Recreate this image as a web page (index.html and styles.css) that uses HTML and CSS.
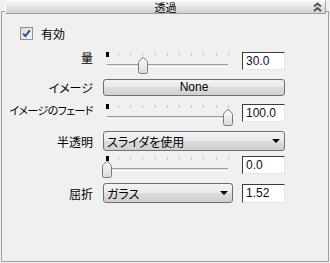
FILE: index.html
```html
<!DOCTYPE html>
<html lang="ja">
<head>
<meta charset="utf-8">
<title>透過</title>
<link rel="stylesheet" href="styles.css">
</head>
<body>
<div class="panel">
    <div class="titlebar">
        <span></span>
        <span class="title">透過</span>
        <svg class="collapse" width="9" height="10" viewBox="0 0 9 10">
            <polyline points="1,4.5 4.5,1.5 8,4.5" />
            <polyline points="1,9 4.5,6 8,9" />
        </svg>
    </div>

    <label class="check">
        <svg class="box" width="13" height="13" viewBox="0 0 13 13">
            <defs>
                <linearGradient id="boxg" x1="0" y1="0" x2="1" y2="1">
                    <stop offset="0" stop-color="#d6d9de"/>
                    <stop offset="1" stop-color="#f6f6f6"/>
                </linearGradient>
                <linearGradient id="thumbg" x1="0" y1="0" x2="0" y2="1">
                    <stop offset="0" stop-color="#fbfbfb"/>
                    <stop offset="1" stop-color="#dadada"/>
                </linearGradient>
            </defs>
            <rect x="0.5" y="0.5" width="12" height="12" fill="url(#boxg)" stroke="#8e8f8f"/>
            <path d="M3.2 6.6 L5.4 9 L9.8 3.4" fill="none" stroke="#24448f" stroke-width="1.8"/>
        </svg>
        有効
    </label>

    <!-- 量 -->
    <div class="row r-slider">
        <span class="label">量</span>
        <div class="slider">
            <svg class="thumb" style="left:35px" width="10" height="17" viewBox="0 0 10 17"><path d="M0.5 5.5 Q0.5 4.6 1.3 3.8 L4 1 Q5 0.2 6 1 L8.7 3.8 Q9.5 4.6 9.5 5.5 V14.5 Q9.5 16.5 7.5 16.5 H2.5 Q0.5 16.5 0.5 14.5 Z" fill="url(#thumbg)" stroke="#7a7a7a"/></svg>
        </div>
        <span class="field">30.0</span>
    </div>

    <!-- イメージ -->
    <div class="row r-button">
        <span class="label">イメージ</span>
        <span class="btn">None</span>
    </div>

    <!-- イメージのフェード -->
    <div class="row r-slider">
        <span class="label narrow">イメージのフェード</span>
        <div class="slider">
            <svg class="thumb" style="left:120px" width="10" height="17" viewBox="0 0 10 17"><path d="M0.5 5.5 Q0.5 4.6 1.3 3.8 L4 1 Q5 0.2 6 1 L8.7 3.8 Q9.5 4.6 9.5 5.5 V14.5 Q9.5 16.5 7.5 16.5 H2.5 Q0.5 16.5 0.5 14.5 Z" fill="url(#thumbg)" stroke="#7a7a7a"/></svg>
        </div>
        <span class="field">100.0</span>
    </div>

    <!-- 半透明 -->
    <div class="row r-select">
        <span class="label">半透明</span>
        <span class="select wide">スライダを使用<i class="arrow"></i></span>
    </div>

    <div class="row r-slider">
        <span class="label"></span>
        <div class="slider">
            <svg class="thumb" style="left:-1px" width="10" height="17" viewBox="0 0 10 17"><path d="M0.5 5.5 Q0.5 4.6 1.3 3.8 L4 1 Q5 0.2 6 1 L8.7 3.8 Q9.5 4.6 9.5 5.5 V14.5 Q9.5 16.5 7.5 16.5 H2.5 Q0.5 16.5 0.5 14.5 Z" fill="url(#thumbg)" stroke="#7a7a7a"/></svg>
        </div>
        <span class="field">0.0</span>
    </div>

    <!-- 屈折 -->
    <div class="row r-select">
        <span class="label">屈折</span>
        <span class="select">ガラス<i class="arrow"></i></span>
        <span class="field">1.52</span>
    </div>
</div>
</body>
</html>
```

FILE: styles.css
```css
/* base */
body{margin:0; background:#f0f0f0; color:#000; font:12px "Noto Sans CJK JP", sans-serif; font-feature-settings:"palt";}

/* group frame */
.panel{margin:11px 1px 0; height:251px; box-sizing:border-box; border:1px solid #a0a0a0;}

.titlebar{margin:-12px 2px 0 3px; height:14px; box-sizing:border-box; border:1px solid; border-color:#fff #a0a0a0 #a0a0a0 #fff;
    background:linear-gradient(#f6f6f6, #d2d2d2); display:grid; grid-template-columns:1fr auto 1fr; align-items:center;}
.title{font-size:11px; line-height:12px;}
.collapse{justify-self:end; margin-right:3px; fill:none; stroke:#505050; stroke-width:1.8;}

.check{display:flex; align-items:center; gap:8px; height:13px; margin:13px 0 0 18px;}
.box{display:block;}

/* rows: label | control | field */
.row{display:grid; grid-template-columns:101px 139px 43px;}
.label{padding-right:10px; text-align:right; white-space:nowrap;}
.label.narrow{font-size:11px; letter-spacing:-0.6px; padding-top:1px;}
.slider, .select{margin-right:9px;}
.select.wide{grid-column:2 / 4; margin-right:0;}

.r-slider{height:23px;}
.r-button{height:17px; margin-top:4px; align-items:center;}
.r-select{height:20px; margin-top:4px; align-items:center;}
.check + .r-slider{margin-top:12px;}
.r-button + .r-slider{margin-top:8px;}
.r-select + .r-slider{margin-top:5px;}

.r-slider .label{line-height:13px; margin-top:-1px;}
.r-slider .field{align-self:start;}

/* slider */
.slider{position:relative; height:23px;
    background:repeating-linear-gradient(to right, #c4c4c4 0 1px, transparent 1px 12.2px) 15px 1px / 111px 3px no-repeat;}
.slider:before{content:""; position:absolute; left:3px; top:0; width:3px; height:5px; background:#000;}
.slider:after{content:""; position:absolute; left:4px; top:12px; width:121px; height:1px; background:#e2e2e2;
    border-top:1px solid #9d9d9d; border-bottom:1px solid #fff;}
.thumb{position:absolute; top:5px; z-index:1;}

/* edit field */
.field{height:18px; box-sizing:border-box; border:1px solid; border-color:#3c3c3c #e6e6e6 #e6e6e6 #3c3c3c; background:#fff;
    padding:0 3px; font:12px/16px "Liberation Sans", Arial, sans-serif; color:#0a0a30;}
.r-select .field{height:19px; line-height:17px;}

/* button & dropdown */
.btn, .select{box-sizing:border-box; border:1px solid #707070; border-radius:3px;
    background:linear-gradient(#f3f3f3, #e9e9e9 50%, #dcdcdc 50%, #d0d0d0);}
.btn{grid-column:2 / 4; height:17px; text-align:center; font:12px/15px "Liberation Sans", Arial, sans-serif;}
.select{height:20px; display:flex; align-items:center; justify-content:space-between; padding:0 4px 0 3px;}
.arrow{width:0; height:0; border-top:4px solid #000; border-left:4px solid transparent; border-right:4px solid transparent;}
```
